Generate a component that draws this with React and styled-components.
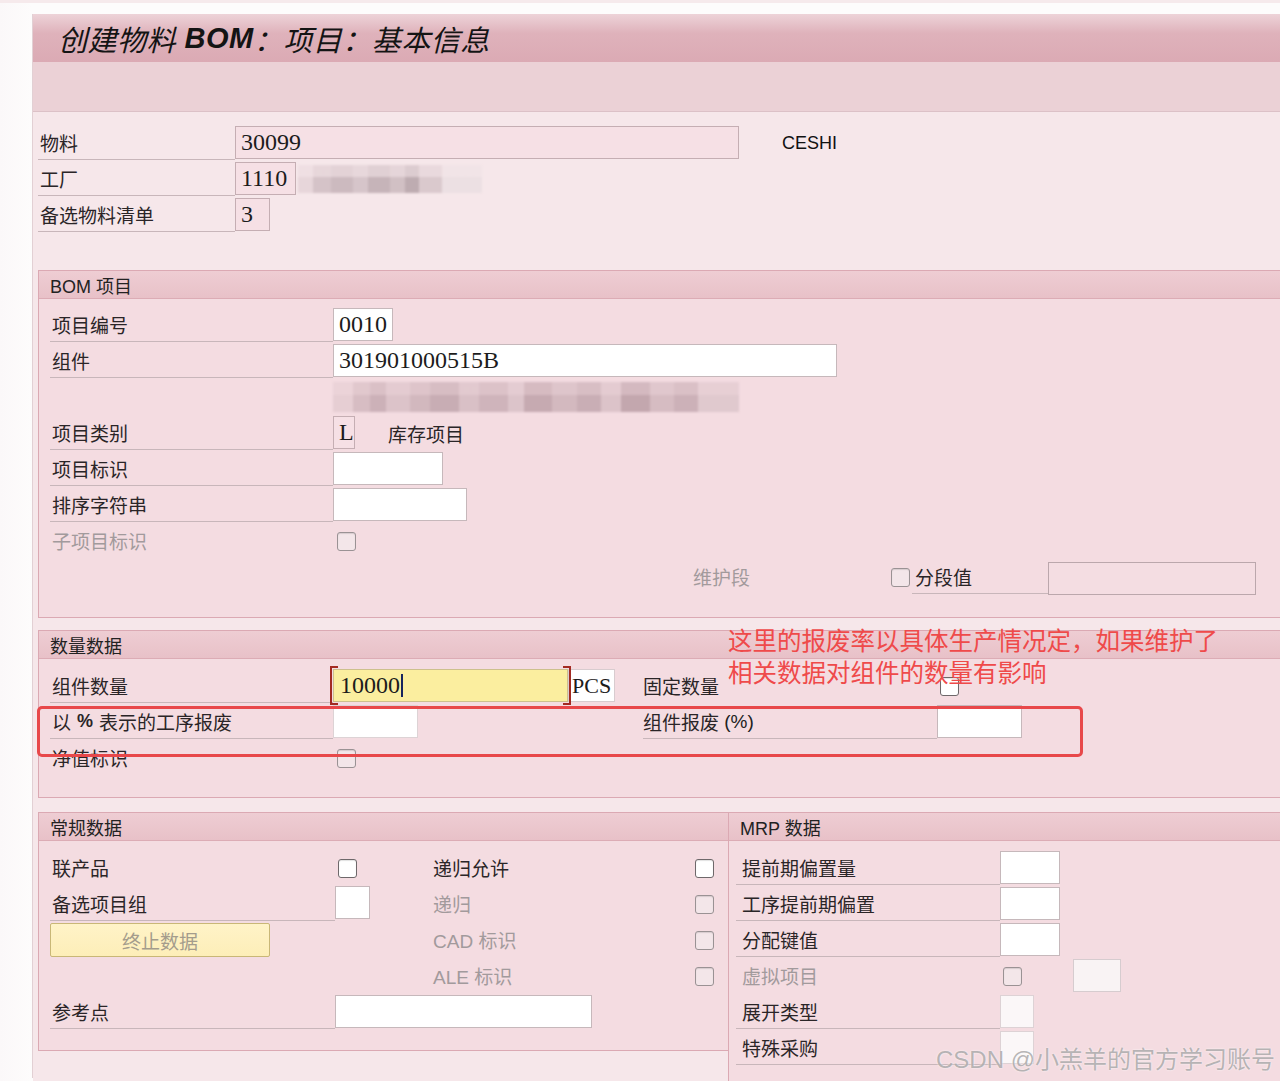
import React from "react";
import styled, { createGlobalStyle } from "styled-components";

const SANS = `"Liberation Sans", "Noto Sans CJK SC", sans-serif`;
const SERIF = `"Liberation Serif", "Noto Sans CJK SC", serif`;

const GlobalStyle = createGlobalStyle`
  html, body {
    margin: 0;
    padding: 0;
    background: #fdfbfb;
    font-family: ${SANS};
  }
  * {
    box-sizing: border-box;
  }
`;

const Screen = styled.div`
  position: relative;
  width: 1280px;
  height: 1081px;
  overflow: hidden;
  padding-top: 14px;
  border-top: 3px solid #f6eaec;
  background: linear-gradient(90deg, #fbf8f9 0, #fdfcfc 32px);
`;

const Frame = styled.div`
  margin-left: 32px;
  width: 1262px;
  height: 100%;
  border-left: 1px solid #e2d0d4;
  margin-top: -3px;
`;

const TitleBar = styled.div`
  height: 48px;
  display: flex;
  align-items: center;
  padding-left: 25px;
  background: linear-gradient(180deg, #edd3d8 0%, #dfb2bb 40%, #dbaab4 100%);
  font-size: 29px;
  font-style: italic;
  color: #141414;
  letter-spacing: 0.5px;

  b {
    font-weight: 700;
  }
`;

const ToolBand = styled.div`
  height: 50px;
  background: #ebd1d6;
  border-bottom: 1px solid #dcc1c7;
`;

const Content = styled.div`
  background: #f6e7ea;
  padding: 14px 0 0 5px;
  height: 969px;
`;

const Rows = styled.div`
  display: flex;
  flex-direction: column;
  gap: 2px;
`;

const Row = styled.div`
  display: flex;
  align-items: flex-start;
  height: 34px;
`;

const Label = styled.div`
  width: ${(p) => p.$w}px;
  height: 34px;
  flex-shrink: 0;
  display: flex;
  align-items: center;
  padding-left: ${(p) => p.$pl ?? 2}px;
  font-size: 19px;
  color: ${(p) => (p.$dim ? "#a29a9c" : "#2a2527")};
  border-bottom: 1px solid ${(p) => (p.$line ? "#c8b6ba" : "transparent")};
  white-space: nowrap;

  b {
    font-weight: 700;
    margin: 0 6px;
    font-size: 18px;
  }
`;

const Input = styled.div`
  width: ${(p) => p.$w}px;
  height: 33px;
  flex-shrink: 0;
  display: flex;
  align-items: center;
  padding-left: 5px;
  background: ${(p) => p.$bg || "#ffffff"};
  border: 1px solid ${(p) => p.$bd || "#c6b8bb"};
  font-family: ${SERIF};
  font-size: 24px;
  color: #1c1c1c;
  overflow: hidden;
  white-space: nowrap;
`;

const Cell = styled.div`
  width: ${(p) => p.$w}px;
  height: 34px;
  flex-shrink: 0;
  display: flex;
  align-items: ${(p) => (p.$top ? "flex-start" : "center")};
  padding-left: ${(p) => p.$pl || 0}px;
`;

const Check = styled.span`
  display: inline-block;
  width: 19px;
  height: 19px;
  border-radius: 3px;
  border: 1.5px solid ${(p) => (p.$dim ? "#9a9294" : "#6e686a")};
  background: ${(p) => (p.$dim ? "#f3e6e9" : "#ffffff")};
  box-shadow: inset 0 1px 1px rgba(0, 0, 0, 0.12);
`;

const Plain = styled.span`
  font-size: ${(p) => p.$size || 19}px;
  color: ${(p) => (p.$dim ? "#a29a9c" : "#2a2527")};
  font-family: ${SANS};
  margin-left: ${(p) => p.$ml || 0}px;
  white-space: nowrap;
`;

const Smudge = styled.div`
  width: ${(p) => p.$w}px;
  height: ${(p) => p.$h}px;
  margin-top: ${(p) => p.$mt || 0}px;
  margin-left: ${(p) => p.$ml || 0}px;
  filter: blur(1px);
  background: ${(p) => p.$paint};
`;

const Section = styled.section`
  position: relative;
  border: 1px solid #dba9b3;
  background: #f4dce1;
  margin-top: ${(p) => p.$mt || 0}px;
  width: ${(p) => (p.$w ? `${p.$w}px` : "auto")};
  flex: ${(p) => (p.$w ? "0 0 auto" : "1 1 auto")};
  margin-left: ${(p) => p.$ml || 0}px;
`;

const SectionHead = styled.div`
  height: 28px;
  display: flex;
  align-items: center;
  padding-left: 11px;
  background: linear-gradient(180deg, #eecdd3 0%, #e8c1c8 100%);
  border-bottom: 1px solid #dcacb5;
  font-size: 18px;
  color: #222;
`;

const SectionBody = styled.div`
  padding: ${(p) => p.$pt}px 0 ${(p) => p.$pb}px ${(p) => p.$pl}px;
`;

const BottomRow = styled.div`
  display: flex;
  align-items: flex-start;
  margin-top: 14px;
`;

const QtyWrap = styled.div`
  position: relative;
  width: 235px;
  height: 33px;
  flex-shrink: 0;

  &::before,
  &::after {
    content: "";
    position: absolute;
    top: -3px;
    bottom: -3px;
    width: 6px;
    border: 2px solid #a32a22;
  }
  &::before {
    left: -3px;
    border-right: none;
  }
  &::after {
    right: -3px;
    border-left: none;
  }
`;

const QtyInput = styled.div`
  height: 100%;
  display: flex;
  align-items: center;
  padding-left: 6px;
  background: #fbee9f;
  border: 1px solid #cdc08d;
  font-family: ${SERIF};
  font-size: 24px;
  color: #1c1c1c;
`;

const Caret = styled.span`
  display: inline-block;
  width: 2px;
  height: 23px;
  background: #16245e;
  margin-left: 1px;
`;

const YellowButton = styled.div`
  width: 220px;
  height: 34px;
  display: flex;
  align-items: center;
  justify-content: center;
  background: linear-gradient(180deg, #fff3c8 0%, #fdeeb8 100%);
  border: 1px solid #c9b777;
  border-radius: 2px;
  font-size: 19px;
  color: #a49c8c;
`;

const Note = styled.div`
  position: absolute;
  left: 689px;
  top: -5px;
  font-size: 24.5px;
  line-height: 32px;
  color: #ef4a4a;
  white-space: nowrap;
  z-index: 3;
`;

const RedFrame = styled.div`
  position: absolute;
  left: -2px;
  top: 75px;
  width: 1046px;
  height: 51px;
  border: 3px solid #e8484a;
  border-radius: 5px;
  z-index: 2;
`;

const Watermark = styled.div`
  position: absolute;
  left: 936px;
  top: 1037px;
  font-size: 24px;
  color: rgba(160, 158, 159, 0.75);
  text-shadow: 0 0 2px rgba(255, 255, 255, 0.9);
  white-space: nowrap;
  z-index: 5;
`;

const plantPaint = `linear-gradient(180deg, rgba(246,231,234,0.55) 0 42%, rgba(0,0,0,0) 42%),
  linear-gradient(90deg, #e7d6da 0 8%, #d5c3c8 8% 18%, #ccbabf 18% 30%, #d6c5ca 30% 38%, #c6b4b9 38% 50%, #d1c0c4 50% 58%, #beacb1 58% 66%, #dac9cd 66% 78%, #ece0e3 78% 100%)`;

const compPaint = `linear-gradient(180deg, rgba(244,220,225,0.35) 0 45%, rgba(0,0,0,0) 45%),
  linear-gradient(90deg, #e6ced3 0 5%, #d7bdc3 5% 9%, #ccb1b8 9% 13%, #dcc3c9 13% 19%, #d2b8be 19% 24%, #c8adb4 24% 31%, #d9c0c6 31% 36%, #cfb4bb 36% 43%, #dcc4ca 43% 47%, #c6aab1 47% 54%, #d3b9bf 54% 60%, #c9aeb5 60% 66%, #dcc3c9 66% 71%, #c3a7ae 71% 78%, #d6bcc2 78% 84%, #ccb1b8 84% 90%, #e0c9ce 90% 100%)`;

const App = () => {
  return (
    <>
      <GlobalStyle />
      <Screen>
        <Frame>
          <TitleBar>
            创建物料 <b>&nbsp;BOM</b>：项目：基本信息
          </TitleBar>
          <ToolBand />
          <Content>
            <Rows>
              <Row>
                <Label $w={197} $line>物料</Label>
                <Input $w={504} $bg="#f6e0e5" $bd="#c5aeb3">30099</Input>
                <Cell $w={120} $pl={43}>
                  <Plain $size={18} style={{ color: "#111" }}>CESHI</Plain>
                </Cell>
              </Row>
              <Row>
                <Label $w={197} $line>工厂</Label>
                <Input $w={61} $bg="#f6e0e5" $bd="#c5aeb3">1110</Input>
                <Smudge $w={184} $h={28} $mt={3} $ml={2} $paint={plantPaint} />
              </Row>
              <Row>
                <Label $w={197} $line>备选物料清单</Label>
                <Input $w={35} $bg="#f6e0e5" $bd="#c5aeb3">3</Input>
              </Row>
            </Rows>

            <Section $mt={38}>
              <SectionHead>BOM 项目</SectionHead>
              <SectionBody $pt={9} $pb={23} $pl={11}>
                <Rows>
                  <Row>
                    <Label $w={283} $line>项目编号</Label>
                    <Input $w={60}>0010</Input>
                  </Row>
                  <Row>
                    <Label $w={283} $line>组件</Label>
                    <Input $w={504}>301901000515B</Input>
                  </Row>
                  <Row>
                    <Label $w={283} />
                    <Smudge $w={406} $h={30} $mt={2} $paint={compPaint} />
                  </Row>
                  <Row>
                    <Label $w={283} $line>项目类别</Label>
                    <Input $w={22} $bg="#f6e0e5" $bd="#c5aeb3">L</Input>
                    <Cell $w={200} $pl={33}>
                      <Plain>库存项目</Plain>
                    </Cell>
                  </Row>
                  <Row>
                    <Label $w={283} $line>项目标识</Label>
                    <Input $w={110} />
                  </Row>
                  <Row>
                    <Label $w={283} $line>排序字符串</Label>
                    <Input $w={134} />
                  </Row>
                  <Row>
                    <Label $w={283} $dim>子项目标识</Label>
                    <Cell $w={40} $pl={4}>
                      <Check $dim />
                    </Cell>
                  </Row>
                  <Row>
                    <Label $w={643} />
                    <Label $w={198} $pl={0} $dim>维护段</Label>
                    <Cell $w={21} $pl={0}>
                      <Check $dim />
                    </Cell>
                    <Label $w={136} $pl={3} $line>分段值</Label>
                    <Input $w={208} $bg="#f4dde2" $bd="#bba7ac" style={{ marginTop: 2 }} />
                  </Row>
                </Rows>
              </SectionBody>
            </Section>

            <Section $mt={12}>
              <SectionHead>数量数据</SectionHead>
              <Note>
                这里的报废率以具体生产情况定，如果维护了
                <br />
                相关数据对组件的数量有影响
              </Note>
              <RedFrame />
              <SectionBody $pt={10} $pb={22} $pl={11}>
                <Rows>
                  <Row>
                    <Label $w={283} $line>组件数量</Label>
                    <QtyWrap>
                      <QtyInput>
                        10000
                        <Caret />
                      </QtyInput>
                    </QtyWrap>
                    <Input $w={47} $bd="#d8cccf" style={{ fontSize: 22, paddingLeft: 3 }}>
                      PCS
                    </Input>
                    <Cell $w={28} />
                    <Label $w={297} $pl={0}>固定数量</Label>
                    <Cell $w={30} $pl={0}>
                      <Check />
                    </Cell>
                  </Row>
                  <Row>
                    <Label $w={283} $line>
                      以<b>%</b>表示的工序报废
                    </Label>
                    <Input $w={85} $bd="#ddd3d5" />
                    <Cell $w={225} />
                    <Label $w={294} $pl={0} $line>
                      组件报废&nbsp;<Plain $size={19} style={{ color: "#222" }}>(%)</Plain>
                    </Label>
                    <Input $w={85} />
                  </Row>
                  <Row>
                    <Label $w={283}>净值标识</Label>
                    <Cell $w={40} $pl={4}>
                      <Check $dim />
                    </Cell>
                  </Row>
                </Rows>
              </SectionBody>
            </Section>

            <BottomRow>
              <Section $w={691}>
                <SectionHead>常规数据</SectionHead>
                <SectionBody $pt={10} $pb={21} $pl={11}>
                  <Rows>
                    <Row>
                      <Label $w={283}>联产品</Label>
                      <Cell $w={100} $pl={5}>
                        <Check />
                      </Cell>
                      <Label $w={262} $pl={0}>递归允许</Label>
                      <Cell $w={24}>
                        <Check />
                      </Cell>
                    </Row>
                    <Row>
                      <Label $w={285} $line>备选项目组</Label>
                      <Input $w={35} style={{ marginTop: -1 }} />
                      <Cell $w={63} />
                      <Label $w={262} $pl={0} $dim>递归</Label>
                      <Cell $w={24}>
                        <Check $dim />
                      </Cell>
                    </Row>
                    <Row>
                      <Cell $w={383} $top>
                        <YellowButton>终止数据</YellowButton>
                      </Cell>
                      <Label $w={262} $pl={0} $dim>CAD 标识</Label>
                      <Cell $w={24}>
                        <Check $dim />
                      </Cell>
                    </Row>
                    <Row>
                      <Cell $w={383} />
                      <Label $w={262} $pl={0} $dim>ALE 标识</Label>
                      <Cell $w={24}>
                        <Check $dim />
                      </Cell>
                    </Row>
                    <Row>
                      <Label $w={285} $line>参考点</Label>
                      <Input $w={257} />
                    </Row>
                  </Rows>
                </SectionBody>
              </Section>
              <Section $ml={-1}>
                <SectionHead>MRP 数据</SectionHead>
                <SectionBody $pt={10} $pb={30} $pl={7}>
                  <Rows>
                    <Row>
                      <Label $w={264} $pl={6} $line>提前期偏置量</Label>
                      <Input $w={60} />
                    </Row>
                    <Row>
                      <Label $w={264} $pl={6} $line>工序提前期偏置</Label>
                      <Input $w={60} />
                    </Row>
                    <Row>
                      <Label $w={264} $pl={6} $line>分配键值</Label>
                      <Input $w={60} />
                    </Row>
                    <Row>
                      <Label $w={264} $pl={6} $dim>虚拟项目</Label>
                      <Cell $w={73} $pl={3}>
                        <Check $dim />
                      </Cell>
                      <Input $w={48} $bg="#f9f3f4" $bd="#d6cccf" />
                    </Row>
                    <Row>
                      <Label $w={264} $pl={6} $line>展开类型</Label>
                      <Input $w={34} $bg="#fbf7f8" $bd="#ddd2d5" />
                    </Row>
                    <Row>
                      <Label $w={264} $pl={6} $line>特殊采购</Label>
                      <Input $w={34} $bg="#fbf7f8" $bd="#ddd2d5" />
                    </Row>
                  </Rows>
                </SectionBody>
              </Section>
            </BottomRow>
          </Content>
        </Frame>
        <Watermark>CSDN @小羔羊的官方学习账号</Watermark>
      </Screen>
    </>
  );
};

export default App;
